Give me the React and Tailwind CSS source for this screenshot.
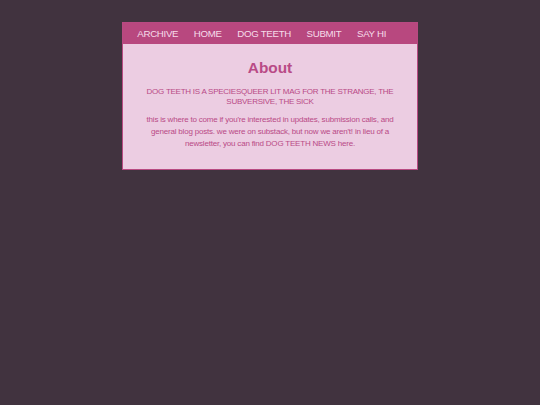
export default function App() {
  const nav = ["ARCHIVE", "HOME", "DOG TEETH", "SUBMIT", "SAY HI"];
  return (
    <div className="min-h-[405px] w-full bg-[#41333f] pt-[22px]" style={{ fontFamily: '"Liberation Sans", Arial, sans-serif' }}>
      <div className="w-[296px] border border-[#b84a82] ml-[122px]">
        <nav className="flex h-[21px] items-center bg-[#b8487f] pl-[6.5px]">
          {nav.map((n) => (
            <span key={n} className="px-[7.8px] text-[9.7px] tracking-[-0.3px] leading-none text-[#f6dcea]">{n}</span>
          ))}
        </nav>
        <div className="bg-[#eccde2] px-[18px] pt-[15px] pb-[19px] text-center text-[#b94a86]">
          <h1 className="text-[15.4px] font-bold leading-[18px]">About</h1>
          <p className="mt-[10px] px-[4px] text-[8px] tracking-[-0.25px] leading-[9.5px] uppercase">DOG TEETH IS A SPECIESQUEER LIT MAG FOR THE STRANGE, THE SUBVERSIVE, THE SICK</p>
          <p className="mt-[8px] px-[4px] text-[8px] tracking-[-0.2px] leading-[12px]">this is where to come if you're interested in updates, submission calls, and general blog posts. we were on substack, but now we aren't! in lieu of a newsletter, you can find DOG TEETH NEWS here.</p>
        </div>
      </div>
    </div>
  );
}
